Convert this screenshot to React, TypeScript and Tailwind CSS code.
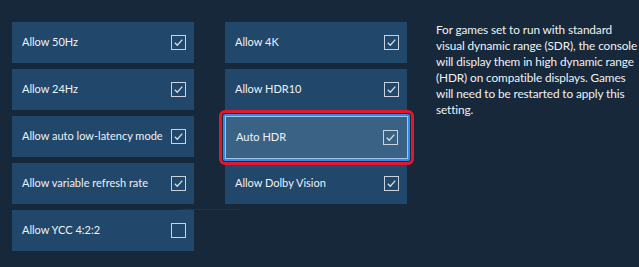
import React from "react";

const Check = ({ checked }: { checked: boolean }) => (
  <div className="w-[15px] h-[15px] border-[1.5px] border-[#c9d3dd] flex items-center justify-center shrink-0">
    {checked && (
      <svg width="11" height="11" viewBox="0 0 11 11">
        <path d="M1.8 5.8 L4.3 8.3 L9.3 2.6" fill="none" stroke="#d4dde6" strokeWidth="1.3" />
      </svg>
    )}
  </div>
);

const Tile = ({ label, checked = true }: { label: string; checked?: boolean }) => (
  <div className="h-[41px] bg-[#21476a] flex items-center justify-between pl-[10px] pr-[8px]">
    <span className="text-[11px] text-[#eef2f6] whitespace-nowrap">{label}</span>
    <Check checked={checked} />
  </div>
);

const lines = [
  "For games set to run with standard",
  "visual dynamic range (SDR), the console",
  "will display them in high dynamic range",
  "(HDR) on compatible displays. Games",
  "will need to be restarted to apply this",
  "setting.",
];

export default function App() {
  return (
    <div
      className="w-[639px] h-[267px] bg-[#16283a] relative overflow-hidden flex"
      style={{ fontFamily: 'Lato, "Noto Sans", sans-serif' }}
    >
      <div className="flex gap-[31px] pl-[12px] pt-[22px]">
        <div className="w-[182px] flex flex-col gap-[6px]">
          <Tile label="Allow 50Hz" />
          <Tile label="Allow 24Hz" />
          <Tile label="Allow auto low-latency mode" />
          <Tile label="Allow variable refresh rate" />
          <Tile label="Allow YCC 4:2:2" checked={false} />
        </div>
        <div className="w-[182px] flex flex-col gap-[6px]">
          <Tile label="Allow 4K" />
          <Tile label="Allow HDR10" />
          <div className="h-[41px] relative">
            <div className="absolute left-[-2px] right-[-3px] top-[-2px] bottom-[-4px] bg-[#3a6285] border-2 border-[#2f8ceb] rounded-[2px] outline-[3px] outline-solid outline-[#e3182c] outline-offset-[1px] flex items-center justify-between pl-[11px] pr-[10px] shadow-[inset_0_0_0_1px_#9cc6ee]">
              <span className="text-[11px] text-[#eef2f6]">Auto HDR</span>
              <Check checked />
            </div>
          </div>
          <Tile label="Allow Dolby Vision" />
        </div>
      </div>
      <div className="absolute left-[180px] top-[209px] w-[60px] h-px bg-[#223344]" />
      <div className="ml-[29px] mt-[22px] text-[11.8px] tracking-[-0.1px] leading-[16px] text-[#eef2f6] whitespace-nowrap flex flex-col">
        {lines.map((l) => (
          <span key={l}>{l}</span>
        ))}
      </div>
    </div>
  );
}
